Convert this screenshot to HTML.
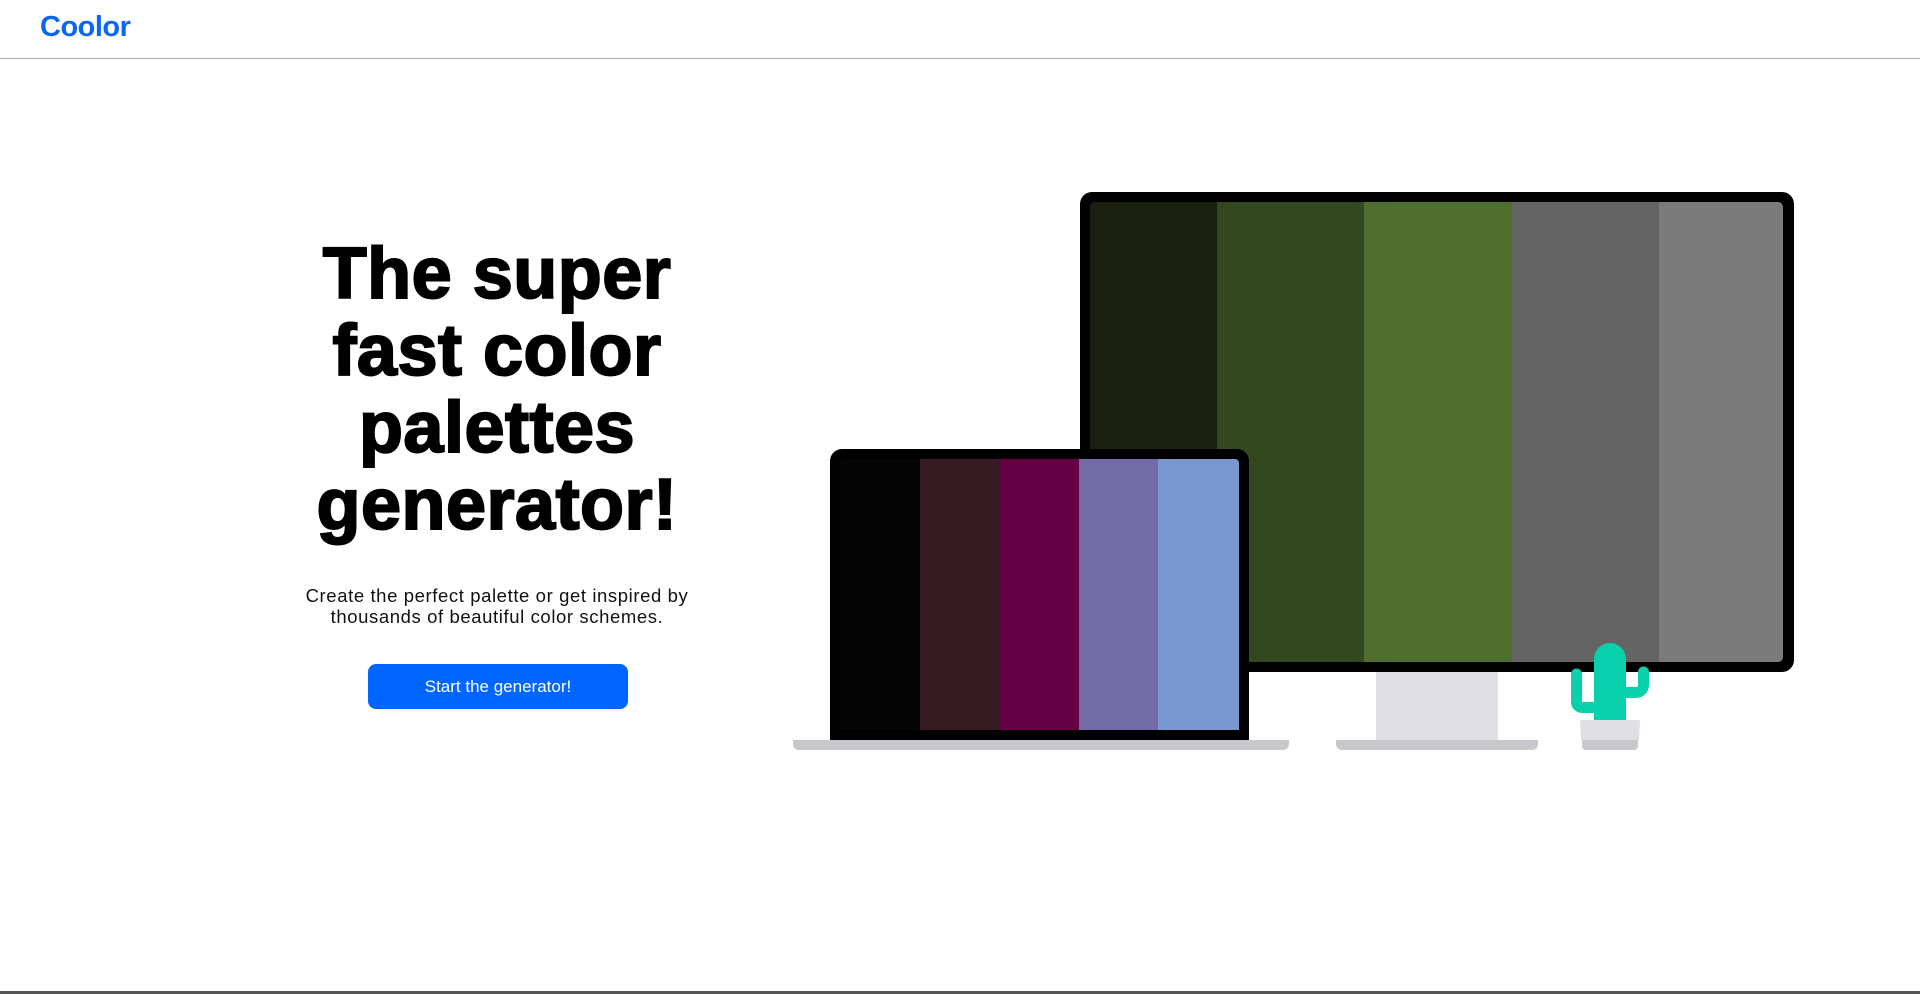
<!DOCTYPE html>
<html><head><meta charset="utf-8"><style>
*{margin:0;padding:0;box-sizing:border-box}
body{width:1920px;height:994px;background:#fff;position:relative;overflow:hidden;font-family:"Liberation Sans",sans-serif}
.hdr{position:absolute;left:0;top:0;width:1920px;height:59px;border-bottom:1.5px solid #a8a8a8}
.logo{position:absolute;left:40px;top:11px;font-size:29px;font-weight:700;color:#0b66f6;letter-spacing:-0.5px}
h1{position:absolute;left:197px;width:600px;top:236px;text-align:center;font-size:72px;line-height:77px;font-weight:900;color:#000;letter-spacing:0.5px;-webkit-text-stroke:2px #000}
p{position:absolute;left:147px;width:700px;top:585px;text-align:center;font-size:18.5px;line-height:21px;color:#111;letter-spacing:.6px}
.btn{position:absolute;left:368px;top:664px;width:260px;height:45px;background:#0066ff;border-radius:8px;color:#fff;font-size:17px;text-align:center;line-height:45px}
.abs{position:absolute}
</style></head><body>
<div class="hdr"><div class="logo">Coolor</div></div>
<h1>The super<br>fast color<br>palettes<br>generator!</h1>
<p>Create the perfect palette or get inspired by<br>thousands of beautiful color schemes.</p>
<div class="btn">Start the generator!</div>

<!-- monitor -->
<div class="abs" style="left:1376px;top:670px;width:122px;height:72px;background:#e0e0e4"></div>
<div class="abs" style="left:1336px;top:740px;width:202px;height:10px;background:#c8c8cc;border-radius:0 0 6px 6px"></div>
<div class="abs" style="left:1080px;top:192px;width:714px;height:480px;background:#000;border-radius:12px"></div>
<div class="abs" style="left:1090px;top:202px;width:693px;height:460px;border-radius:5px;overflow:hidden;display:flex">
<div style="width:127px;background:#1a2010"></div><div style="width:147px;background:#33481e"></div><div style="width:148px;background:#506e2e"></div><div style="width:147px;background:#646464"></div><div style="flex:1;background:#7b7b7b"></div></div>

<!-- laptop -->
<div class="abs" style="left:793px;top:740px;width:496px;height:10px;background:#c8c8cc;border-radius:0 0 6px 6px"></div>
<div class="abs" style="left:830px;top:449px;width:419px;height:291px;background:#000;border-radius:12px 12px 0 0"></div>
<div class="abs" style="left:840px;top:459px;width:399px;height:271px;border-radius:4px 4px 0 0;overflow:hidden;display:flex">
<div style="width:80px;background:#050505"></div><div style="width:79px;background:#341c22"></div><div style="width:80px;background:#640044"></div><div style="width:79px;background:#726ba6"></div><div style="flex:1;background:#7a98cf"></div></div>

<!-- cactus -->
<svg class="abs" style="left:1560px;top:636px" width="100" height="116" viewBox="0 0 100 116">
<path d="M34 86 V23 a16 16 0 0 1 32 0 V86 Z" fill="#08d0aa"/>
<path d="M36 77 H22 a11 11 0 0 1 -11 -11 V38 a5.5 5.5 0 0 1 11 0 V66 h14 Z" fill="#08d0aa"/>
<path d="M64 62 H76 a13 13 0 0 0 13 -13 V36 a5.5 5.5 0 0 0 -11 0 V49 a2 2 0 0 1 -2 2 H64 Z" fill="#08d0aa"/>
<path d="M20 84 H80 L79 104 H21 Z" fill="#e0e0e4"/>
<path d="M22 104 H78 V110 a4 4 0 0 1 -4 4 H26 a4 4 0 0 1 -4 -4 Z" fill="#c8c8cc"/>
</svg>
<div class="abs" style="left:0;top:991px;width:1920px;height:3px;background:#555"></div>
</body></html>
